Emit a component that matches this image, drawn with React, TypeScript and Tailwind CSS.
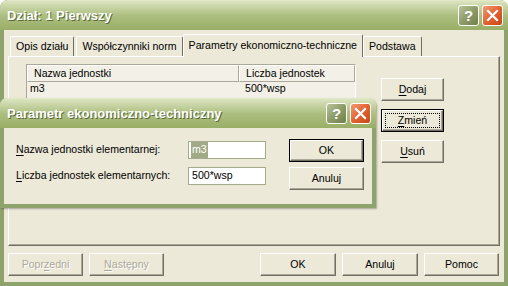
import React from "react";

const font = { fontFamily: '"Liberation Sans", Arial, sans-serif' };

function TitleButtons() {
  return (
    <div className="flex gap-[3px]">
      <div className="w-[21px] h-[21px] rounded-[3px] border border-white bg-gradient-to-br from-[#b8c49a] via-[#8e9c6a] to-[#6f7f4c] flex items-center justify-center text-white font-bold text-[15px] leading-none">
        ?
      </div>
      <div className="w-[21px] h-[21px] rounded-[3px] border border-white bg-gradient-to-br from-[#f19a74] via-[#e2622f] to-[#c8461b] flex items-center justify-center">
        <svg width="13" height="13" viewBox="0 0 13 13">
          <path d="M2 2 L11 11 M11 2 L2 11" stroke="white" strokeWidth="2.2" strokeLinecap="square" />
        </svg>
      </div>
    </div>
  );
}

function TitleBar({ title }: { title: string }) {
  return (
    <div className="h-[30px] flex items-center justify-between pl-[7px] pr-[5px] rounded-t-[7px] bg-gradient-to-b from-[#dbe4c0] via-[#adbf80] to-[#99ae66] border-t border-[#e2e9c9]">
      <span className="text-white font-bold text-[13px] [text-shadow:1px_1px_0_#5b6a3a]">{title}</span>
      <TitleButtons />
    </div>
  );
}

function Btn({
  children,
  w,
  focused,
  def,
  disabled,
  className = "",
}: {
  children: React.ReactNode;
  w: number;
  focused?: boolean;
  def?: boolean;
  disabled?: boolean;
  className?: string;
}) {
  return (
    <div
      className={`h-[23px] relative flex items-center justify-center text-[10.6px] bg-[#ece9d8] ${
        focused || def ? "border border-black" : ""
      } ${className}`}
      style={{ width: w }}
    >
      <div className="w-full h-full flex items-center justify-center border-t border-l border-white border-r border-b border-r-[#716f64] border-b-[#716f64] shadow-[inset_-1px_-1px_0_#aca899]">
        <span className={disabled ? "text-[#aca899] [text-shadow:1px_1px_0_#fff]" : "text-black"}>{children}</span>
      </div>
      {focused && <div className="absolute inset-[3px] border border-dotted border-black" />}
    </div>
  );
}

function U({ children }: { children: React.ReactNode }) {
  return <span className="underline underline-offset-[2px]">{children}</span>;
}

function Tab({ label, active }: { label: string; active?: boolean }) {
  return (
    <div
      className={`flex items-center text-[10.6px] bg-[#ece9d8] border-t border-l border-white border-r border-r-[#716f64] rounded-t-[2px] ${
        active ? "h-[23px] -mx-[2px] px-[5px] relative z-10 -mb-[1px]" : "h-[20px] px-[5px]"
      }`}
    >
      {label}
    </div>
  );
}

export default function App() {
  return (
    <div style={font} className="w-[508px] h-[286px] relative bg-[#8ea36b] rounded-t-[8px] overflow-hidden flex flex-col">
      <TitleBar title="Dział: 1 Pierwszy" />
      <div className="flex-1 mx-[4px] mb-[4px] bg-[#ece9d8] px-[4px] pt-[4px] flex flex-col">
        <div className="flex items-end h-[22px] pl-[2px] gap-[2px]">
          <Tab label="Opis działu" />
          <Tab label="Współczynniki norm" />
          <Tab label="Parametry ekonomiczno-techniczne" active />
          <Tab label="Podstawa" />
        </div>
        <div className="h-[190px] border-t border-l border-white border-r border-b border-r-[#716f64] border-b-[#716f64] shadow-[inset_-1px_-1px_0_#aca899] relative flex pt-[7px] pl-[17px]">
          <div className="w-[330px] h-[120px] border-t border-l border-[#aca899] border-r border-b border-r-white border-b-white bg-[#f3f1e7]">
            <div className="flex h-[17px] text-[10.6px]">
              <div className="w-[212px] pl-[6px] flex items-center border-r border-b border-[#aca899] border-t border-l border-t-white border-l-white">Nazwa jednostki</div>
              <div className="w-[116px] pl-[6px] flex items-center border-r border-b border-[#aca899] border-t border-l border-t-white border-l-white">Liczba jednostek</div>
            </div>
            <div className="flex h-[14px] text-[10.6px] items-center">
              <div className="w-[212px] pl-[3px]">m3</div>
              <div className="w-[116px] pl-[6px]">500*wsp</div>
            </div>
          </div>
          <div className="ml-[25px] pt-[14px] flex flex-col gap-[8px]">
            <Btn w={63}><U>D</U>odaj</Btn>
            <Btn w={63} focused><U>Z</U>mień</Btn>
            <Btn w={63}><U>U</U>suń</Btn>
          </div>
        </div>
        <div className="flex mt-[7px] gap-[6px]">
          <Btn w={75} disabled>Popr<U>z</U>edni</Btn>
          <Btn w={75} disabled><U>N</U>astępny</Btn>
          <div className="flex-1" />
          <Btn w={76}>OK</Btn>
          <Btn w={76}>Anuluj</Btn>
          <Btn w={75} className="mr-[1px]">Pomoc</Btn>
        </div>
      </div>

      <div className="absolute left-0 top-[98px] w-[376px] h-[110px] bg-[#8ea36b] rounded-t-[8px] flex flex-col shadow-[1px_1px_2px_rgba(0,0,0,0.3)]">
        <TitleBar title="Parametr ekonomiczno-techniczny" />
        <div className="flex-1 mx-[4px] mb-[4px] bg-[#ece9d8] flex pl-[12px] pt-[13px]">
          <div className="w-[172px] flex flex-col gap-[8px] text-[10.6px]">
            <div className="h-[18px] flex items-center"><U>N</U>azwa jednostki elementarnej:</div>
            <div className="h-[18px] flex items-center"><U>L</U>iczba jednostek elementarnych:</div>
          </div>
          <div className="flex flex-col gap-[8px] text-[10.6px]">
            <div className="w-[78px] h-[18px] bg-white border border-[#a5ac8e] flex items-center pl-[2px]">
              <span className="bg-[#a2a987] text-white px-[1px]">m3</span>
            </div>
            <div className="w-[78px] h-[18px] bg-white border border-[#a5ac8e] flex items-center pl-[3px]">500*wsp</div>
          </div>
          <div className="ml-[23px] -mt-[2px] flex flex-col gap-[5px]">
            <Btn w={75} def>OK</Btn>
            <Btn w={75}>Anuluj</Btn>
          </div>
        </div>
      </div>
    </div>
  );
}
